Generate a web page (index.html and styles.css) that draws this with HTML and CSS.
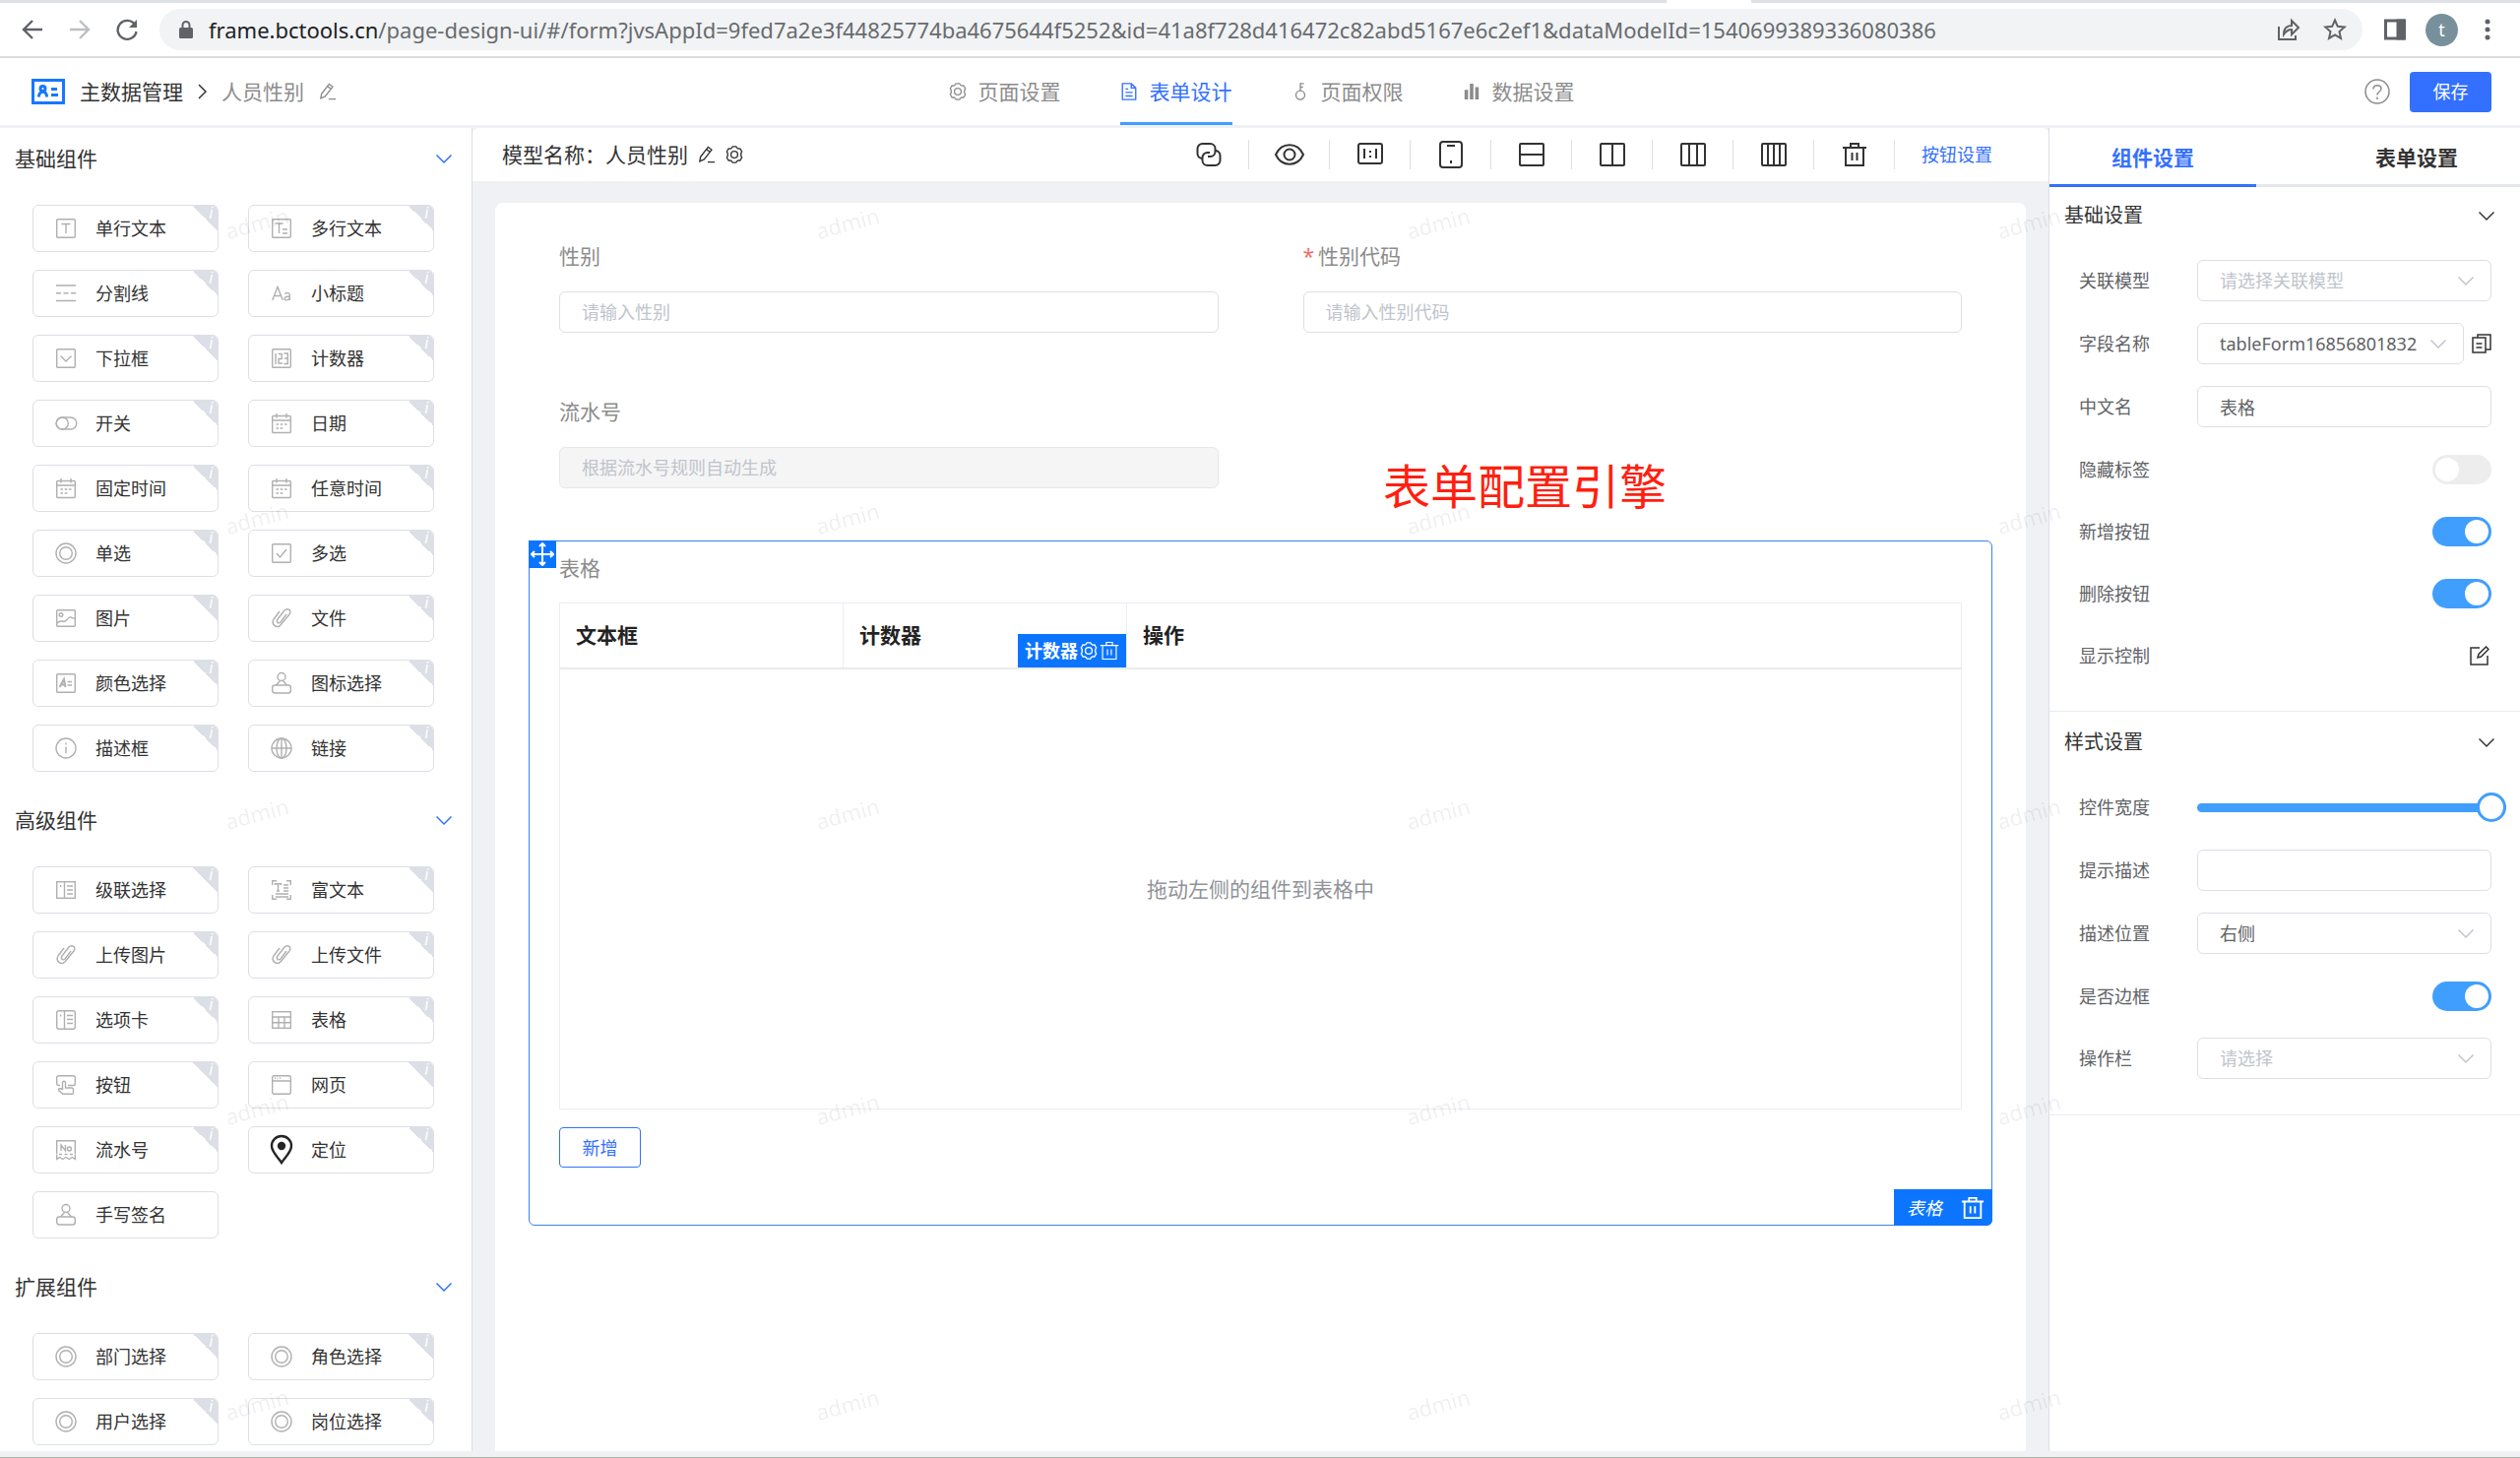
FILE: index.html
```html
<!DOCTYPE html>
<html lang="zh-CN">
<head>
<meta charset="utf-8">
<meta name="viewport" content="width=device-width, initial-scale=1">
<title>表单设计</title>
<link rel="stylesheet" href="styles.css">
</head>
<body>
<svg class="sprite" aria-hidden="true">
  <symbol id="chevron-down" viewBox="0 0 16 16"><path d="M.5 4.500 8 12l7.500-7.500"/></symbol>
  <symbol id="gear" viewBox="0 0 20 20"><path d="M7 2.500 8 1h4l1 1.500 1.500 1 2-.2 2 3.400-1 1.800v3l1 1.800-2 3.400-2-.2-1.500 1L12 19H8l-1-1.500-1.500-1-2 .2-2-3.400 1-1.800v-3l-1-1.800 2-3.400 2 .2z"/><circle cx="10" cy="10" r="3.800"/></symbol>
  <symbol id="pencil" viewBox="0 0 20 20"><path d="M3 12.500 11.500 1.500l4 3L7 15.500l-5 2.200zM9.500 4l4 3M11 18.500h8"/></symbol>
  <symbol id="trash" viewBox="0 0 26 26"><path d="M1 6h24M9 6V2h8v4M4 6v18h18V6M10.500 11v8M15.500 11v8"/></symbol>
  <symbol id="text" viewBox="0 0 20 20"><rect x=".7" y=".7" width="18.600" height="18.600" rx="1"/><path d="M5.500 5.500h9M10 5.500V15"/></symbol>
  <symbol id="textarea" viewBox="0 0 20 20"><rect x=".7" y=".7" width="18.600" height="18.600" rx="1"/><path d="M3.500 5h8M7.500 5v10M11 11h5M11 15h5"/></symbol>
  <symbol id="divider" viewBox="0 0 20 20"><path d="M0 2h20M0 17.500h20M0 9.700h5M7.500 9.700h5M15 9.700h5"/></symbol>
  <symbol id="heading" viewBox="0 0 20 20"><path d="M.7 17 6 3.500 11.300 17M2.500 12.500h7M13.300 10.500c2-1.500 5-1.200 5 1V17m0-3.500c-2-.5-5.300 0-5.300 1.700 0 2.300 4.300 2.300 5.300-.2"/></symbol>
  <symbol id="dropdown" viewBox="0 0 20 20"><rect x=".7" y=".7" width="18.600" height="18.600" rx="1"/><path d="m4.500 7.500 5.500 5.500 5.500-5.500"/></symbol>
  <symbol id="counter" viewBox="0 0 20 20"><rect x=".7" y=".7" width="18.600" height="18.600" rx="1"/><path d="M4 5v11M6.700 5.500h3.500v5H7V15h4M12.300 5h4v10.500h-4M13 10h3"/></symbol>
  <symbol id="toggle" viewBox="0 0 20 20"><rect x="0" y="4" width="20.800" height="12" rx="6"/><circle cx="6.300" cy="10" r="6"/></symbol>
  <symbol id="calendar" viewBox="0 0 20 20"><rect x=".7" y="2.500" width="18.600" height="17" rx="1"/><path d="M.7 7h18.600M5 0v4.500M15 0v4.500M4.500 11h2.500M8.700 11h2.600M13 11h2.500M4.500 15h2.500M8.700 15h2.600"/></symbol>
  <symbol id="radio" viewBox="0 0 20 20"><circle cx="10" cy="10" r="10"/><circle cx="10" cy="10" r="6.300"/></symbol>
  <symbol id="checkbox" viewBox="0 0 20 20"><rect x=".7" y=".7" width="18.600" height="18.600" rx="1"/><path d="m5 10 3.500 4 6.500-8"/></symbol>
  <symbol id="picture" viewBox="0 0 20 20"><rect x=".7" y="1.700" width="18.600" height="16.600" rx="1"/><circle cx="5" cy="6.500" r="1.800"/><path d="M1 15c3-4 5-1 8-2s3-5 6-4c1 .4 2 1.500 4 1"/></symbol>
  <symbol id="clip" viewBox="0 0 20 20"><path d="M8 3 2 11c-3 5 3 10 7 6l9-11c3-4-2-7-5-4L6 11c-2 3 1 5 3 3l6-8"/></symbol>
  <symbol id="color" viewBox="0 0 20 20"><rect x=".7" y=".7" width="18.600" height="18.600" rx="1"/><path stroke-width="2" d="M3.500 14 8 6l1.500 8M5 11.500h4"/><path d="M11.500 8.500H16M11.500 12H16"/></symbol>
  <symbol id="stamp" viewBox="0 0 20 20"><circle cx="10" cy="3.500" r="4"/><path d="M8.500 7.500 4.500 12M11.500 7.500l4 4.500"/><rect x=".7" y="12" width="18.600" height="8" rx="2.500"/></symbol>
  <symbol id="info" viewBox="0 0 20 20"><circle cx="10" cy="10" r="10"/><path d="M10 8.500V15M10 4.500v2"/></symbol>
  <symbol id="globe" viewBox="0 0 20 20"><circle cx="10" cy="10" r="10"/><ellipse cx="10" cy="10" rx="5" ry="10"/><path d="M10 0v20M0 10h20"/></symbol>
  <symbol id="cascade" viewBox="0 0 20 20"><rect x=".7" y="1.700" width="18.600" height="16.600"/><path d="M8.500 1.700v16.600M4.500 5v2M11 6h6M11 10h6M11 14h6"/></symbol>
  <symbol id="richtext" viewBox="0 0 20 20"><path d="M.7 5V.7H5M15 .7h4.300V5M19.300 15v4.300H15M5 19.300H.7V15M3.500 5V3.800h6V5M6.500 4v7M5 11h3M12 5h5M12 8h5M12 11h5M4 14h13M4 17h13"/></symbol>
  <symbol id="tabs" viewBox="0 0 20 20"><rect x=".7" y=".7" width="18.600" height="18.600" rx="2"/><path d="M8.500.7v18.600M4.500 4.500v2M11 5.500h6M11 9.500h6M11 13.500h6"/></symbol>
  <symbol id="grid" viewBox="0 0 20 20"><rect x=".7" y="1.700" width="18.600" height="16.600"/><path d="M.7 7h18.600M.7 12.700h18.600M7 7v11M13 7v11"/></symbol>
  <symbol id="press" viewBox="0 0 20 20"><path d="M4 10.500H2.500A1.800 1.800 0 0 1 .7 8.700V2.500A1.800 1.800 0 0 1 2.500.7h15a1.800 1.800 0 0 1 1.800 1.800v6.200a1.800 1.800 0 0 1-1.800 1.800H12M6.500 15V7.500c0-1.600 3-1.600 3 0V13h6c1.300 0 2 .8 2 2v3c0 .8-.5 1.300-1.300 1.300H7L2.500 15.500c-.5-2 2-2.500 4-.5"/></symbol>
  <symbol id="webpage" viewBox="0 0 20 20"><rect x=".7" y=".7" width="18.600" height="18.600" rx="1.500"/><path d="M.7 6h18.600M3 3.300h1M5.500 3.300h1M8 3.300h1"/></symbol>
  <symbol id="serial" viewBox="0 0 20 20"><path d="M.7 14.500V.7h18.600v13.800M.7 15v4.500l3-2 3 2 3.300-2 3.300 2 3-2 3 2V15M3 14.500h3M8.500 14.500h3M14 14.500h3M5 11V5l4.500 6V5"/><circle cx="13.500" cy="9" r="2"/></symbol>
  <symbol id="pin" viewBox="0 0 24 30"><path d="M12 28C8 22 2 17 2 11a10 10 0 0 1 20 0c0 6-6 11-10 17z"/><circle cx="12" cy="11" r="3" fill="currentColor"/></symbol>
</svg>

<div class="browser">
  <div class="tabstrip"><span class="strip strip-left"></span><span class="strip strip-right"></span></div>
  <div class="navbar">
    <button class="nav-btn" type="button" aria-label="后退"><svg viewBox="0 0 24 24"><path d="M22 12H3M12 3l-9 9 9 9"/></svg></button>
    <button class="nav-btn dim" type="button" aria-label="前进"><svg viewBox="0 0 24 24"><path d="M2 12h19M12 3l9 9-9 9"/></svg></button>
    <button class="nav-btn" type="button" aria-label="刷新"><svg viewBox="0 0 24 24"><path d="M20 7a9.500 9.500 0 1 0 1.500 7"/><path d="M22 2v8h-8z" fill="currentColor" stroke="none"/></svg></button>
    <div class="address">
      <svg class="lock" viewBox="0 0 14 18"><rect x="0" y="7" width="14" height="11" rx="1.500" fill="currentColor" stroke="none"/><path d="M3.500 8V4.500a3.500 3.500 0 0 1 7 0V8"/></svg>
      <span class="url"><b class="host">frame.bctools.cn</b>/page-design-ui/#/form?jvsAppId=9fed7a2e3f44825774ba4675644f5252&amp;id=41a8f728d416472c82abd5167e6c2ef1&amp;dataModelId=1540699389336080386</span>
      <button class="addr-btn" type="button" aria-label="分享"><svg viewBox="0 0 24 24"><path d="M2 9v13h17v-4M7 17c0-6 3-9 8-9V3l7 7-7 7v-5c-4 0-6 2-8 5z"/></svg></button>
      <button class="addr-btn" type="button" aria-label="收藏"><svg viewBox="0 0 24 24"><path d="m12 2.500 2.800 6.300 6.900.7-5.200 4.600 1.500 6.800-6-3.500-6 3.500 1.500-6.800-5.200-4.600 6.900-.7z"/></svg></button>
    </div>
    <button class="panel-btn" type="button" aria-label="侧边栏"><svg viewBox="0 0 22 22"><rect x="1.500" y="2" width="19" height="18"/><path d="M14 2h6v18h-6z" fill="currentColor"/></svg></button>
    <span class="avatar">t</span>
    <button class="menu-btn" type="button" aria-label="菜单"><svg viewBox="0 0 6 22"><circle cx="3" cy="3" r="2.500"/><circle cx="3" cy="11" r="2.500"/><circle cx="3" cy="19" r="2.500"/></svg></button>
  </div>
</div>

<header class="header">
  <div class="crumbs">
    <svg class="logo" viewBox="0 0 34 26"><rect x="1.500" y="1.500" width="31" height="23"/><circle cx="11.500" cy="10" r="2.500"/><path d="M7.500 18.500c0-7 8-7 8 0M20 10.500h6M20 16.500h7"/></svg>
    <a class="crumb" href="#">主数据管理</a>
    <svg class="crumb-sep" viewBox="0 0 9 16"><path d="m1 1 7 7-7 7"/></svg>
    <span class="crumb-current">人员性别</span>
    <svg class="ico18 muted"><use href="#pencil"/></svg>
  </div>
  <nav class="main-tabs">
    <a class="main-tab" href="#"><svg class="ico18"><use href="#gear"/></svg>页面设置</a>
    <a class="main-tab active" href="#"><svg class="ico18" viewBox="0 0 20 20"><path d="M2.500 1h10l5 5v13h-15zM12.500 1v5h5M6 7h3M6 11h8M6 15h8"/></svg>表单设计</a>
    <a class="main-tab" href="#"><svg class="ico18" viewBox="0 0 20 20"><circle cx="10" cy="14" r="5"/><path d="M10 9V1h4M10 5h3"/></svg>页面权限</a>
    <a class="main-tab" href="#"><svg class="ico18" viewBox="0 0 20 20"><path d="M2 8h4v11H2zM8 1h4v18H8zM14 5h4v14h-4z" fill="currentColor" stroke="none"/></svg>数据设置</a>
  </nav>
  <div class="header-actions">
    <button class="help" type="button" aria-label="帮助"><svg viewBox="0 0 26 26"><circle cx="13" cy="13" r="12"/><path d="M9 10.500c0-5 8-5 8-.5 0 3-4 3-4 6.500M13 18.500V21"/></svg></button>
    <button class="save" type="button">保存</button>
  </div>
</header>

<main class="workspace">
  <aside class="palette">
    <section class="group">
      <h2 class="group-title">基础组件<svg class="ico16"><use href="#chevron-down"/></svg></h2>
      <div class="cards">
        <button class="card" type="button"><svg><use href="#text"/></svg>单行文本<i class="tip">i</i></button>
        <button class="card" type="button"><svg><use href="#textarea"/></svg>多行文本<i class="tip">i</i></button>
        <button class="card" type="button"><svg><use href="#divider"/></svg>分割线<i class="tip">i</i></button>
        <button class="card" type="button"><svg><use href="#heading"/></svg>小标题<i class="tip">i</i></button>
        <button class="card" type="button"><svg><use href="#dropdown"/></svg>下拉框<i class="tip">i</i></button>
        <button class="card" type="button"><svg><use href="#counter"/></svg>计数器<i class="tip">i</i></button>
        <button class="card" type="button"><svg><use href="#toggle"/></svg>开关<i class="tip">i</i></button>
        <button class="card" type="button"><svg><use href="#calendar"/></svg>日期<i class="tip">i</i></button>
        <button class="card" type="button"><svg><use href="#calendar"/></svg>固定时间<i class="tip">i</i></button>
        <button class="card" type="button"><svg><use href="#calendar"/></svg>任意时间<i class="tip">i</i></button>
        <button class="card" type="button"><svg><use href="#radio"/></svg>单选<i class="tip">i</i></button>
        <button class="card" type="button"><svg><use href="#checkbox"/></svg>多选<i class="tip">i</i></button>
        <button class="card" type="button"><svg><use href="#picture"/></svg>图片<i class="tip">i</i></button>
        <button class="card" type="button"><svg><use href="#clip"/></svg>文件<i class="tip">i</i></button>
        <button class="card" type="button"><svg><use href="#color"/></svg>颜色选择<i class="tip">i</i></button>
        <button class="card" type="button"><svg><use href="#stamp"/></svg>图标选择<i class="tip">i</i></button>
        <button class="card" type="button"><svg><use href="#info"/></svg>描述框<i class="tip">i</i></button>
        <button class="card" type="button"><svg><use href="#globe"/></svg>链接<i class="tip">i</i></button>
      </div>
    </section>
    <section class="group">
      <h2 class="group-title">高级组件<svg class="ico16"><use href="#chevron-down"/></svg></h2>
      <div class="cards">
        <button class="card" type="button"><svg><use href="#cascade"/></svg>级联选择<i class="tip">i</i></button>
        <button class="card" type="button"><svg><use href="#richtext"/></svg>富文本<i class="tip">i</i></button>
        <button class="card" type="button"><svg><use href="#clip"/></svg>上传图片<i class="tip">i</i></button>
        <button class="card" type="button"><svg><use href="#clip"/></svg>上传文件<i class="tip">i</i></button>
        <button class="card" type="button"><svg><use href="#tabs"/></svg>选项卡<i class="tip">i</i></button>
        <button class="card" type="button"><svg><use href="#grid"/></svg>表格<i class="tip">i</i></button>
        <button class="card" type="button"><svg><use href="#press"/></svg>按钮<i class="tip">i</i></button>
        <button class="card" type="button"><svg><use href="#webpage"/></svg>网页<i class="tip">i</i></button>
        <button class="card" type="button"><svg><use href="#serial"/></svg>流水号<i class="tip">i</i></button>
        <button class="card" type="button"><svg class="pin"><use href="#pin"/></svg>定位<i class="tip">i</i></button>
        <button class="card" type="button"><svg><use href="#stamp"/></svg>手写签名</button>
      </div>
    </section>
    <section class="group">
      <h2 class="group-title">扩展组件<svg class="ico16"><use href="#chevron-down"/></svg></h2>
      <div class="cards">
        <button class="card" type="button"><svg><use href="#radio"/></svg>部门选择<i class="tip">i</i></button>
        <button class="card" type="button"><svg><use href="#radio"/></svg>角色选择<i class="tip">i</i></button>
        <button class="card" type="button"><svg><use href="#radio"/></svg>用户选择<i class="tip">i</i></button>
        <button class="card" type="button"><svg><use href="#radio"/></svg>岗位选择<i class="tip">i</i></button>
      </div>
    </section>
  </aside>

  <section class="stage">
    <div class="toolbar">
      <div class="model">模型名称：人员性别<svg class="ico18"><use href="#pencil"/></svg><svg class="ico18"><use href="#gear"/></svg></div>
      <div class="tools">
        <button class="tool" type="button" aria-label="关联"><svg viewBox="0 0 26 26"><path d="M6 17a5 5 0 0 1-4.500-5V7A5 5 0 0 1 6.500 2h8a5 5 0 0 1 5 5v3a5 5 0 0 1-5 5H12"/><path d="M20 9a5 5 0 0 1 4.500 5v5a5 5 0 0 1-5 5h-8a5 5 0 0 1-5-5v-3a5 5 0 0 1 5-5H14"/></svg></button>
        <button class="tool" type="button" aria-label="预览"><svg class="wide" viewBox="0 0 30 26"><path d="M1 13C7 0 23 0 29 13 23 26 7 26 1 13z"/><circle cx="15" cy="13" r="5.500"/></svg></button>
        <button class="tool" type="button" aria-label="比例"><svg viewBox="0 0 26 26"><rect x="1" y="2" width="24" height="20" rx="2"/><path d="M7 7v10M19 7v10M13 9v2M13 14v2"/></svg></button>
        <button class="tool" type="button" aria-label="手机"><svg viewBox="0 0 26 26"><rect x="2" y="0" width="22" height="26" rx="3"/><path d="M9 4h8M13 19v3"/></svg></button>
        <button class="tool" type="button" aria-label="两行"><svg viewBox="0 0 26 26"><rect x="1" y="2" width="24" height="22" rx="1"/><path d="M1 13h24"/></svg></button>
        <button class="tool" type="button" aria-label="两列"><svg viewBox="0 0 26 26"><rect x="1" y="2" width="24" height="22" rx="1"/><path d="M13 2v22"/></svg></button>
        <button class="tool" type="button" aria-label="三列"><svg viewBox="0 0 26 26"><rect x="1" y="2" width="24" height="22" rx="1"/><path d="M9 2v22M17 2v22"/></svg></button>
        <button class="tool" type="button" aria-label="四列"><svg viewBox="0 0 26 26"><rect x="1" y="2" width="24" height="22" rx="1"/><path d="M7 2v22M13 2v22M19 2v22"/></svg></button>
        <button class="tool" type="button" aria-label="清空"><svg><use href="#trash"/></svg></button>
        <a class="button-settings" href="#">按钮设置</a>
      </div>
    </div>

    <div class="canvas">
      <form class="form">
        <div class="field">
          <label class="label" for="gender">性别</label>
          <input class="input" id="gender" type="text" placeholder="请输入性别">
        </div>
        <div class="field">
          <label class="label" for="gender-code"><span class="required">*</span>性别代码</label>
          <input class="input" id="gender-code" type="text" placeholder="请输入性别代码">
        </div>
        <div class="field">
          <label class="label" for="serial-no">流水号</label>
          <input class="input" id="serial-no" type="text" placeholder="根据流水号规则自动生成" disabled>
        </div>
        <p class="annotation">表单配置引擎</p>
      </form>

      <div class="widget">
        <span class="move"><svg viewBox="0 0 24 24"><path d="M12 1v22M1 12h22M9 4l3-3 3 3M9 20l3 3 3-3M4 9l-3 3 3 3M20 9l3 3-3 3"/></svg></span>
        <div class="label">表格</div>
        <table class="table">
          <colgroup><col class="col-field"><col class="col-field"><col></colgroup>
          <thead>
            <tr>
              <th>文本框</th>
              <th>计数器<span class="cell-tag">计数器<svg class="ico18"><use href="#gear"/></svg><svg class="ico20"><use href="#trash"/></svg></span></th>
              <th>操作</th>
            </tr>
          </thead>
          <tbody><tr><td colspan="3">拖动左侧的组件到表格中</td></tr></tbody>
        </table>
        <button class="add" type="button">新增</button>
        <div class="widget-tag"><em>表格</em><svg class="ico24"><use href="#trash"/></svg></div>
      </div>
    </div>
  </section>

  <aside class="inspector">
    <div class="panel-tabs">
      <button class="panel-tab active" type="button">组件设置</button>
      <button class="panel-tab" type="button">表单设置</button>
    </div>
    <section class="panel">
      <h3 class="panel-title">基础设置<svg class="ico16"><use href="#chevron-down"/></svg></h3>
      <div class="rows">
        <div class="row">
          <label for="p-model">关联模型</label>
          <div class="select"><select class="empty" id="p-model"><option>请选择关联模型</option></select><svg class="ico16"><use href="#chevron-down"/></svg></div>
        </div>
        <div class="row">
          <label for="p-field">字段名称</label>
          <div class="select"><select id="p-field"><option>tableForm16856801832</option></select><svg class="ico16"><use href="#chevron-down"/></svg></div>
          <button class="icon-btn" type="button" aria-label="复制"><svg viewBox="0 0 20 20"><path d="M1 4h13v15H1zM6 4V1h13v15h-5M4.500 10h6M4.500 14h6"/></svg></button>
        </div>
        <div class="row">
          <label for="p-name">中文名</label>
          <input class="input" id="p-name" type="text" value="表格">
        </div>
        <div class="row compact"><label for="p-hide">隐藏标签</label><input class="switch" id="p-hide" type="checkbox"></div>
        <div class="row compact"><label for="p-add">新增按钮</label><input class="switch" id="p-add" type="checkbox" checked></div>
        <div class="row compact"><label for="p-del">删除按钮</label><input class="switch" id="p-del" type="checkbox" checked></div>
        <div class="row compact">
          <span>显示控制</span>
          <button class="icon-btn edit" type="button" aria-label="编辑"><svg viewBox="0 0 20 20"><path d="M10 2H1v17h17v-9M8 12l1-3.500L16.500 1l2.500 2.500-7.500 7.500z"/></svg></button>
        </div>
      </div>
    </section>
    <section class="panel">
      <h3 class="panel-title">样式设置<svg class="ico16"><use href="#chevron-down"/></svg></h3>
      <div class="rows">
        <div class="row"><label for="p-width">控件宽度</label><input class="slider" id="p-width" type="range" min="0" max="100" value="100"></div>
        <div class="row"><label for="p-hint">提示描述</label><input class="input" id="p-hint" type="text"></div>
        <div class="row">
          <label for="p-pos">描述位置</label>
          <div class="select"><select id="p-pos"><option>右侧</option></select><svg class="ico16"><use href="#chevron-down"/></svg></div>
        </div>
        <div class="row compact"><label for="p-border">是否边框</label><input class="switch" id="p-border" type="checkbox" checked></div>
        <div class="row">
          <label for="p-ops">操作栏</label>
          <div class="select"><select class="empty" id="p-ops"><option>请选择</option></select><svg class="ico16"><use href="#chevron-down"/></svg></div>
        </div>
      </div>
    </section>
  </aside>
</main>

<div class="watermark" aria-hidden="true">
  <span>admin</span><span>admin</span><span>admin</span><span>admin</span>
  <span>admin</span><span>admin</span><span>admin</span><span>admin</span>
  <span>admin</span><span>admin</span><span>admin</span><span>admin</span>
  <span>admin</span><span>admin</span><span>admin</span><span>admin</span>
  <span>admin</span><span>admin</span><span>admin</span><span>admin</span>
</div>
</body>
</html>
```
FILE: styles.css
```css
:root {
  --primary: #3370ff;
  --switch: #409eff;
  --select: #0c75ff;
  --surface: #f0f1f5;
  --line: #dcdfe6;
  --text: #333;
  --text-2: #606266;
  --muted: #8c8c8c;
  --hint: #c0c4cc;
}

* { box-sizing: border-box; }

body {
  margin: 0;
  height: 100vh;
  display: flex;
  flex-direction: column;
  overflow: hidden;
  position: relative;
  background: var(--surface);
  color: var(--text);
  font: 18px/26px "Noto Sans", "Noto Sans CJK SC", sans-serif;
}

button, input, select { font: inherit; color: inherit; }
button { padding: 0; border: 0; background: none; }
a { color: inherit; text-decoration: none; }
h2, h3, p { margin: 0; font-weight: 400; }

svg {
  display: block;
  flex: none;
  fill: none;
  stroke: currentColor;
  stroke-width: 1.5;
}
symbol { overflow: visible; }
.sprite { position: absolute; width: 0; height: 0; }
.ico16 { width: 16px; height: 16px; }
.ico18 { width: 18px; height: 20px; }
.ico20 { width: 20px; height: 20px; }
.ico24 { width: 24px; height: 24px; }
.muted { color: var(--muted); }

/* Browser bar */
.browser {
  flex: none;
  background: #fff;
  border-bottom: 2px solid #dadcdc;
}
.tabstrip {
  display: flex;
  justify-content: space-between;
  height: 3px;
}
.strip { background: #dee1e6; }
.strip-left { width: 66.13%; }
.strip-right { width: 30.5%; }
.navbar {
  display: flex;
  align-items: center;
  height: 54px;
  padding: 0 30px 0 21px;
  color: #5f6368;
}
.nav-btn { width: 24px; margin-right: 24px; }
.nav-btn svg { height: 24px; stroke-width: 2.4; }
.nav-btn.dim { color: #bcbfc2; }
.address {
  flex: 1;
  display: flex;
  align-items: center;
  height: 42px;
  margin-right: 22px;
  padding: 0 16px 0 20px;
  border-radius: 21px;
  background: #f1f3f4;
}
.nav-btn + .address { margin-left: -3px; }
.lock { width: 14px; height: 18px; margin-right: 16px; stroke-width: 2; }
.url {
  flex: 1;
  overflow: hidden;
  white-space: nowrap;
  font-size: 22px;
  line-height: 40px;
  color: #686b6f;
}
.host { font-weight: 400; color: #202124; }
.addr-btn { width: 24px; margin-left: 23px; }
.addr-btn svg { height: 24px; stroke-width: 2; }
.panel-btn svg { width: 22px; height: 22px; stroke-width: 3; }
.avatar {
  width: 33px;
  height: 33px;
  margin: 0 27px 0 20px;
  border-radius: 50%;
  background: #78909c;
  color: #fff;
  text-align: center;
  line-height: 32px;
}
.menu-btn svg { width: 6px; height: 22px; fill: currentColor; stroke: none; }

/* App header */
.header {
  flex: none;
  display: grid;
  grid-template-columns: 1fr auto 1fr;
  align-items: center;
  height: 71px;
  padding: 0 29px 0 32px;
  border-bottom: 3px solid var(--surface);
  background: #fff;
  font-size: 21px;
}
.crumbs { display: flex; align-items: center; gap: 15px; }
.logo { width: 34px; height: 26px; color: #1677ff; stroke-width: 3; }
.crumb-sep { width: 9px; height: 16px; }
.crumb-current { color: var(--muted); }
.main-tabs { display: flex; gap: 60px; align-self: stretch; }
.main-tab {
  display: flex;
  align-items: center;
  gap: 12px;
  border-bottom: 3px solid transparent;
  padding-top: 3px;
  color: var(--muted);
}
.main-tab.active { color: var(--primary); border-bottom-color: var(--switch); }
.header-actions {
  display: flex;
  align-items: center;
  justify-content: flex-end;
  gap: 20px;
}
.help { color: var(--muted); }
.help svg { width: 26px; height: 26px; }
.save {
  width: 83px;
  height: 41px;
  border-radius: 4px;
  background: var(--primary);
  color: #fff;
  font-size: 18px;
}

.workspace {
  flex: 1;
  min-height: 0;
  display: flex;
  padding-bottom: 6px;
  border-bottom: 1px solid #aeb6ae;
}

/* Component palette */
.palette {
  flex: none;
  width: 480px;
  overflow: hidden;
  border-right: 1px solid var(--line);
  background: #fff;
}
.group { padding: 0 20px 18px 15px; }
.group-title {
  display: flex;
  align-items: center;
  justify-content: space-between;
  height: 62px;
  margin-bottom: 16px;
  font-size: 21px;
}
.group-title svg { color: var(--primary); }
.cards {
  display: grid;
  grid-template-columns: 189px 189px;
  gap: 18px 30px;
  padding-left: 18px;
}
.card {
  position: relative;
  display: flex;
  align-items: center;
  gap: 20px;
  height: 48px;
  padding: 0 0 0 23px;
  border: 1px solid var(--line);
  border-radius: 6px;
  overflow: hidden;
  background: #fff;
  text-align: left;
}
.card svg {
  width: 20px;
  height: 20px;
  color: #b0b0b0;
  overflow: visible;
  stroke-width: 1.4;
}
.card .pin {
  width: 24px;
  height: 30px;
  margin: 0 -2px;
  color: #262626;
  stroke-width: 2.4;
}
.tip {
  position: absolute;
  top: 0;
  right: 0;
  width: 25px;
  height: 25px;
  padding-right: 5px;
  background: linear-gradient(45deg, transparent 50%, var(--line) 50%);
  color: #fff;
  font: italic 16px/15px "Liberation Sans", sans-serif;
  text-align: right;
}

/* Stage */
.stage {
  flex: 1;
  min-width: 0;
  display: flex;
  flex-direction: column;
}
.toolbar {
  flex: none;
  display: flex;
  align-items: center;
  justify-content: space-between;
  height: 54px;
  padding: 0 57px 0 30px;
  border-radius: 6px 6px 0 0;
  background: #fff;
}
.model { display: flex; align-items: center; gap: 10px; font-size: 21px; }
.tools { display: flex; align-items: center; }
.tool {
  display: flex;
  justify-content: center;
  width: 82px;
  padding: 2px 0;
  border-right: 1px solid var(--line);
}
.tool svg { width: 26px; height: 26px; overflow: visible; stroke-width: 2; }
.tool .wide { width: 30px; }
.button-settings { margin-left: 27px; color: var(--primary); }

.canvas {
  flex: 1;
  margin: 22px 23px 0;
  padding: 39px 34px 0;
  border-radius: 8px 8px 0 0;
  background: #fff;
}
.form {
  position: relative;
  display: grid;
  grid-template-columns: 1fr 1fr;
  gap: 65px 86px;
  padding: 0 31px;
  margin-bottom: 53px;
}
.field { display: grid; gap: 21px; }
.label {
  font-size: 21px;
  line-height: 30px;
  color: var(--muted);
}
.required { margin-right: 4px; color: #f56c6c; }
.input, .select select {
  width: 100%;
  height: 42px;
  padding: 0 22px;
  border: 1px solid var(--line);
  border-radius: 6px;
  background: #fff;
  color: var(--text-2);
}
.input::placeholder { color: var(--hint); opacity: 1; }
.input:disabled { background: #f5f5f5; border-color: #e4e7ed; }
.annotation {
  position: absolute;
  left: 868px;
  top: 214px;
  font-size: 48px;
  line-height: 70px;
  color: #ff1f10;
}

.widget {
  position: relative;
  padding: 12px 30px 58px;
  border: 1px solid #3b82e8;
  border-radius: 6px;
}
.move {
  position: absolute;
  top: -1px;
  left: -1px;
  padding: 2px;
  background: var(--select);
  color: #fff;
}
.move svg { width: 24px; height: 24px; stroke-width: 2; }
.table {
  width: 100%;
  margin: 20px 0 18px;
  border-collapse: collapse;
  table-layout: fixed;
  font-size: 21px;
}
.col-field { width: 288px; }
.table th {
  position: relative;
  height: 66px;
  padding: 0 16px;
  border: 1px solid #ebeef5;
  border-bottom: 2px solid #ebebeb;
  color: #222;
  font-weight: 700;
  text-align: left;
}
.table td {
  height: 448px;
  border: 1px solid #ebeef5;
  color: #909399;
  text-align: center;
}
.cell-tag {
  position: absolute;
  right: 0;
  bottom: 0;
  display: flex;
  align-items: center;
  gap: 2px;
  height: 34px;
  padding: 0 7px;
  background: var(--select);
  color: #fff;
  font-size: 18px;
}
.add {
  display: block;
  width: 83px;
  height: 41px;
  border: 1px solid var(--primary);
  border-radius: 4px;
  color: var(--primary);
}
.widget-tag {
  position: absolute;
  right: -1px;
  bottom: -1px;
  display: flex;
  align-items: center;
  gap: 19px;
  height: 37px;
  padding: 0 8px 0 13px;
  border-radius: 0 0 6px 0;
  background: var(--select);
  color: #fff;
}
.widget-tag svg { stroke-width: 2; }

/* Inspector */
.inspector {
  flex: none;
  width: 479px;
  overflow: hidden;
  border-left: 1px solid var(--line);
  background: #fff;
}
.panel-tabs {
  display: flex;
  justify-content: space-between;
  height: 60px;
  box-shadow: inset 0 -3px #e4e7ed;
}
.panel-tab {
  width: 210px;
  padding-top: 3px;
  border-bottom: 3px solid transparent;
  font-size: 21px;
  font-weight: 700;
}
.panel-tab.active { color: var(--primary); border-bottom-color: var(--primary); }
.panel {
  padding: 0 29px 36px 15px;
  border-bottom: 1px solid #e8ebf3;
}
.panel + .panel { padding-top: 2px; }
.panel-title {
  display: flex;
  align-items: center;
  justify-content: space-between;
  height: 58px;
  margin: 0 -3px 16px 0;
  font-size: 20px;
}
.rows { display: grid; gap: 22px; padding-left: 15px; }
.row {
  display: flex;
  align-items: center;
  height: 42px;
  color: var(--text-2);
}
.row.compact { height: 41px; justify-content: space-between; }
.row > label { flex: none; width: 120px; }
.select { flex: 1; min-width: 0; display: grid; align-items: center; }
.select > * { grid-area: 1 / 1; }
.select select { appearance: none; padding-right: 40px; }
.select .empty { color: var(--hint); }
.select svg {
  justify-self: end;
  margin-right: 18px;
  color: var(--hint);
  pointer-events: none;
}
.icon-btn { margin-left: 8px; color: var(--text); }
.icon-btn svg { width: 20px; height: 20px; }
.icon-btn.edit { margin-right: 2px; }
.switch {
  appearance: none;
  width: 60px;
  height: 30px;
  margin: 0;
  padding: 3px;
  border-radius: 15px;
  background: #ededed;
}
.switch::before {
  content: "";
  display: block;
  width: 24px;
  height: 24px;
  border-radius: 50%;
  background: #fff;
}
.switch:checked { background: var(--switch); }
.switch:checked::before { margin-left: auto; }
.slider {
  appearance: none;
  flex: 1;
  height: 30px;
  margin: 0 -15px 0 0;
  background: none;
}
.slider::-webkit-slider-runnable-track {
  height: 9px;
  border-radius: 5px;
  background: var(--switch);
}
.slider::-webkit-slider-thumb {
  appearance: none;
  width: 30px;
  height: 30px;
  margin-top: -11px;
  border: 3px solid var(--switch);
  border-radius: 50%;
  background: #fff;
}

/* Watermark laid over the whole page */
.watermark {
  position: absolute;
  inset: 0;
  display: grid;
  grid-template-columns: repeat(4, 600px);
  grid-auto-rows: 300px;
  padding: 211px 0 0 228px;
  overflow: hidden;
  pointer-events: none;
}
.watermark span {
  justify-self: start;
  align-self: start;
  font-size: 22px;
  line-height: 30px;
  color: rgba(0, 0, 0, .07);
  transform: rotate(-15deg);
}
```
